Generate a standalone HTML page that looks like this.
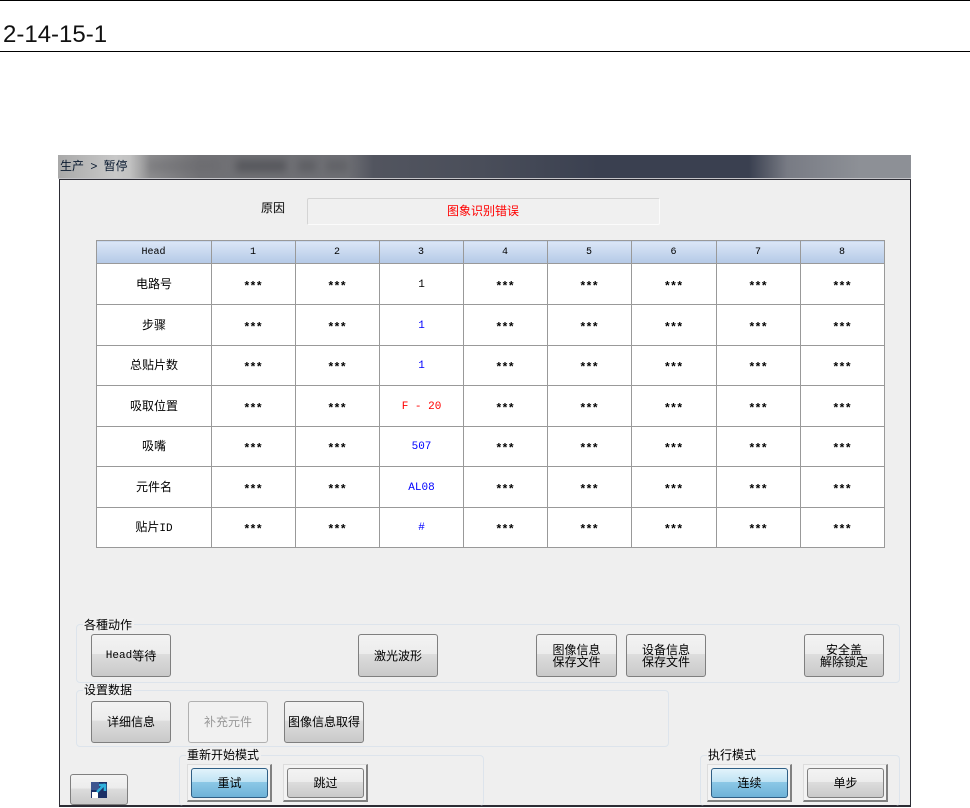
<!DOCTYPE html>
<html><head><meta charset="utf-8">
<style>
html,body{margin:0;padding:0;background:#fff;}
body{width:970px;height:808px;position:relative;overflow:hidden;font-family:"Liberation Sans","WenQuanYi Zen Hei","Noto Sans CJK SC",sans-serif;font-size:12px;color:#000;}
div{box-sizing:border-box;position:absolute;}
.grp{border:1px solid #dde4ec;border-radius:4px;}
.lbl{background:#f0f0f0;padding:0 2px 0 1px;line-height:14px;height:14px;white-space:nowrap;}
.btn{border:1px solid #7f7f7f;border-radius:3px;background:linear-gradient(#f3f3f3 0,#ececec 46%,#dddddd 47%,#c9c9c9 100%);text-align:center;display:flex;align-items:center;justify-content:center;line-height:12px;white-space:nowrap;}
.dis{border-color:#b0b0b0;background:#f1f1f1;color:#999;}
.blue{border:1px solid #2f5f85;background:linear-gradient(#e2f3fb 0,#bfe3f4 46%,#8cc8e6 47%,#6eb2d8 100%);}
.frame{background:#f3f3f3;border:1px solid #dcdcdc;border-right:2px solid #808080;border-bottom:2px solid #808080;}
.t{left:96px;top:240px;width:788px;height:308px;}
table{border-collapse:collapse;table-layout:fixed;width:788px;height:308px;background:#fff;}
td{border:1px solid #999;padding:5px 2px 0 0;text-align:center;font-family:"Liberation Mono",monospace;font-size:12px;font-weight:bold;letter-spacing:-1px;}
td.n,td.b,td.r,td.k{font-weight:normal;letter-spacing:0;padding:1px 0 0 0;}
td.n{font-family:"Liberation Sans","WenQuanYi Zen Hei","Noto Sans CJK SC",sans-serif;font-size:12px;padding:0 0 2px 0;}
td.b,td.r,td.k{font-size:11px;}
tr.h td{background:linear-gradient(#dbe6f7,#b4c9e6);font-size:10px;font-weight:normal;letter-spacing:0;padding:0 1px 0 0;}
.m{font-family:"Liberation Mono",monospace;font-size:11px;}
.b{color:#00f}.r{color:#f00}
</style></head><body>
<div style="left:0;top:0;width:970px;height:1px;background:#000"></div>
<div style="left:3px;top:21px;font-size:24px;line-height:28px;color:#111;white-space:nowrap">2-14-15-1</div>
<div style="left:0;top:51px;width:970px;height:1px;background:#000"></div>

<div style="left:58px;top:155px;width:853px;height:23px;overflow:hidden;background:linear-gradient(90deg,#a9a9a9 0,#c8c8c8 6.7%,#c2c2c2 8.4%,#8c8c8e 10.8%,#717175 16.6%,#6e6f74 34%,#52555f 37%,#4a4e5a 49.5%,#3a4050 63.5%,#3a4050 81%,#787b84 85.5%,#8d9096 94%,#8d9096 100%)">
  <div style="left:90px;top:5px;width:72px;height:12px;background:#66666a;filter:blur(4px);opacity:.35"></div>
  <div style="left:178px;top:5px;width:50px;height:12px;background:#48494e;filter:blur(4px);opacity:.6"></div>
  <div style="left:240px;top:5px;width:18px;height:12px;background:#4c4d52;filter:blur(4px);opacity:.45"></div>
  <div style="left:268px;top:5px;width:22px;height:12px;background:#4c4d52;filter:blur(4px);opacity:.35"></div>
  <div style="left:2px;top:4px;line-height:14px;color:#0a1a30;white-space:nowrap;word-spacing:3px">生产 &gt; 暂停</div>
</div>
<div style="left:58px;top:178px;width:853px;height:1px;background:#c4c4c8"></div>
<div style="left:59px;top:179px;width:852px;height:628px;background:#efefef;border:1px solid #2c2c34;border-bottom-width:2px"></div>

<div style="left:261px;top:201px;line-height:14px;white-space:nowrap">原因</div>
<div style="left:307px;top:198px;width:353px;height:27px;background:#f0f0f0;border:1px solid;border-color:#d4d4d4 #fbfbfb #fbfbfb #d4d4d4;text-align:center;color:#f00;line-height:25px;border-radius:2px;padding-right:1px">图象识别错误</div>

<div class="t"><table>
<colgroup><col style="width:115px"><col style="width:84px"><col style="width:84px"><col style="width:84px"><col style="width:84px"><col style="width:84px"><col style="width:85px"><col style="width:84px"><col style="width:84px"></colgroup>
<tr class="h" style="height:23px"><td>Head</td><td>1</td><td>2</td><td>3</td><td>4</td><td>5</td><td>6</td><td>7</td><td>8</td></tr>
<tr style="height:41px"><td class="n">电路号</td><td>***</td><td>***</td><td class="k">1</td><td>***</td><td>***</td><td>***</td><td>***</td><td>***</td></tr>
<tr style="height:41px"><td class="n">步骤</td><td>***</td><td>***</td><td class="b">1</td><td>***</td><td>***</td><td>***</td><td>***</td><td>***</td></tr>
<tr style="height:40px"><td class="n">总贴片数</td><td>***</td><td>***</td><td class="b">1</td><td>***</td><td>***</td><td>***</td><td>***</td><td>***</td></tr>
<tr style="height:41px"><td class="n">吸取位置</td><td>***</td><td>***</td><td class="r">F - 20</td><td>***</td><td>***</td><td>***</td><td>***</td><td>***</td></tr>
<tr style="height:40px"><td class="n">吸嘴</td><td>***</td><td>***</td><td class="b">507</td><td>***</td><td>***</td><td>***</td><td>***</td><td>***</td></tr>
<tr style="height:41px"><td class="n">元件名</td><td>***</td><td>***</td><td class="b">AL08</td><td>***</td><td>***</td><td>***</td><td>***</td><td>***</td></tr>
<tr style="height:40px"><td class="n">贴片<span class="m">ID</span></td><td>***</td><td>***</td><td class="b">#</td><td>***</td><td>***</td><td>***</td><td>***</td><td>***</td></tr>
</table></div>

<div class="grp" style="left:76px;top:624px;width:824px;height:59px"></div>
<div class="lbl" style="left:83px;top:618px">各種动作</div>
<div class="btn" style="left:91px;top:634px;width:80px;height:43px"><span class="m">Head</span>等待</div>
<div class="btn" style="left:358px;top:634px;width:80px;height:43px">激光波形</div>
<div class="btn" style="left:536px;top:634px;width:81px;height:43px">图像信息<br>保存文件</div>
<div class="btn" style="left:626px;top:634px;width:80px;height:43px">设备信息<br>保存文件</div>
<div class="btn" style="left:804px;top:634px;width:80px;height:43px">安全盖<br>解除锁定</div>

<div class="grp" style="left:76px;top:690px;width:593px;height:57px"></div>
<div class="lbl" style="left:83px;top:683px">设置数据</div>
<div class="btn" style="left:91px;top:701px;width:80px;height:42px">详细信息</div>
<div class="btn dis" style="left:188px;top:701px;width:80px;height:42px">补充元件</div>
<div class="btn" style="left:284px;top:701px;width:80px;height:42px">图像信息取得</div>

<div class="btn" style="left:70px;top:774px;width:58px;height:31px">
  <svg width="16" height="16" viewBox="0 0 16 16" style="display:block"><rect width="16" height="16" fill="#1a2f66"/><rect x="0" y="0" width="8" height="8" fill="#3d5590"/><rect x="1" y="10" width="6" height="6" fill="#fff"/><path d="M6 10L14 2M8 3h6v6" stroke="#2fb0dc" stroke-width="2.6" fill="none"/></svg>
</div>

<div class="grp" style="left:179px;top:755px;width:305px;height:51px;border-bottom:0"></div>
<div class="lbl" style="left:186px;top:748px">重新开始模式</div>
<div class="frame" style="left:187px;top:764px;width:85px;height:38px"></div>
<div class="btn blue" style="left:191px;top:768px;width:77px;height:30px">重试</div>
<div class="frame" style="left:283px;top:764px;width:85px;height:38px"></div>
<div class="btn" style="left:287px;top:768px;width:77px;height:30px">跳过</div>

<div class="grp" style="left:700px;top:755px;width:200px;height:51px;border-bottom:0"></div>
<div class="lbl" style="left:707px;top:748px">执行模式</div>
<div class="frame" style="left:707px;top:764px;width:85px;height:38px"></div>
<div class="btn blue" style="left:711px;top:768px;width:77px;height:30px">连续</div>
<div class="frame" style="left:803px;top:764px;width:85px;height:38px"></div>
<div class="btn" style="left:807px;top:768px;width:77px;height:30px">单步</div>
</body></html>
